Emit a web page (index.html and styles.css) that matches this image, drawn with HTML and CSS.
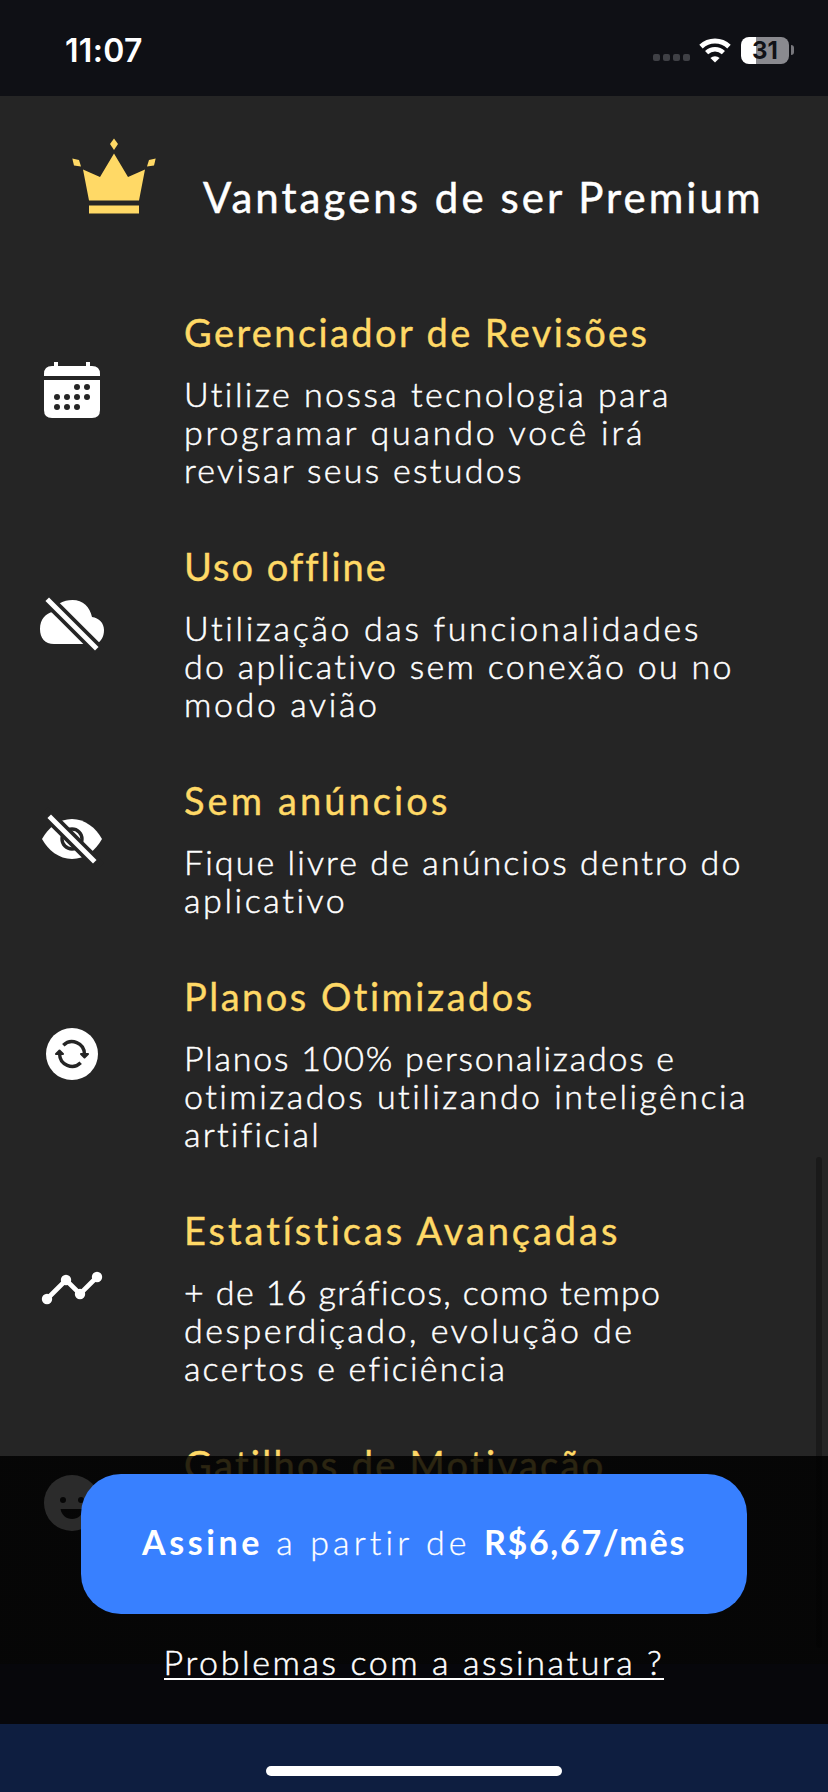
FILE: index.html
```html
<!DOCTYPE html>
<html lang="pt-BR">
<head>
    <meta charset="UTF-8">
    <meta name="viewport" content="width=device-width, initial-scale=1.0">
    <title>Premium</title>
    <link rel="stylesheet" href="styles.css">
</head>
<body>
    <div class="screen">
        <header class="status-bar">
            <span class="time">11:07</span>
            <div class="status-icons">
                <div class="signal"><i></i><i></i><i></i><i></i></div>
                <svg class="wifi" viewBox="0 0 32 25">
                    <path d="M2 8.6 A20.5 20.5 0 0 1 30 8.6" fill="none" stroke="#fff" stroke-width="5"/>
                    <path d="M7.6 14.6 A12.4 12.4 0 0 1 24.4 14.6" fill="none" stroke="#fff" stroke-width="4.6"/>
                    <path d="M16 24.6 L11.4 20 A6.6 6.6 0 0 1 20.6 20 Z" fill="#fff"/>
                </svg>
                <div class="battery">31</div>
                <div class="battery-cap"></div>
            </div>
        </header>

        <main class="sheet">
            <div class="sheet-header">
                <svg class="crown" viewBox="0 0 84 76">
                    <path d="M42 15.5 L56 39 L73 31.5 L67 62.5 H17 L11 31.5 L28 39 Z"/>
                    <path d="M17 67.5 H67 V75.5 H17 Z"/>
                    <path d="M42 0.5 L46 6 L42 12 L38 6 Z"/>
                    <path d="M0.3 20.6 L7 22 L9 28.6 L2 27.5 Z"/>
                    <path d="M83.7 20.6 L77 22 L75 28.6 L82 27.5 Z"/>
                </svg>
                <h1>Vantagens de ser Premium</h1>
            </div>

            <ul class="features">
                <li class="feature">
                    <svg class="icon" viewBox="0 0 64 64">
                        <path d="M4 18 V16 Q4 8 12 8 H14 V4 H18 V8 H46 V4 H50 V8 H52 Q60 8 60 16 V18 Z"/>
                        <path d="M4 22 H60 V52 Q60 60 52 60 H12 Q4 60 4 52 Z"/>
                        <g class="cut">
                            <circle cx="37" cy="29" r="3"/><circle cx="47" cy="29" r="3"/>
                            <circle cx="17" cy="39" r="3"/><circle cx="27" cy="39" r="3"/>
                            <circle cx="37" cy="39" r="3"/><circle cx="47" cy="39" r="3"/>
                            <circle cx="17" cy="49" r="3"/><circle cx="27" cy="49" r="3"/><circle cx="37" cy="49" r="3"/>
                        </g>
                    </svg>
                    <div class="feature-text">
                        <h2 class="t1">Gerenciador de Revisões</h2>
                        <p><span class="a1">Utilize nossa tecnologia para</span> <span class="a2">programar quando você irá</span> <span class="a3">revisar seus estudos</span></p>
                    </div>
                </li>
                <li class="feature">
                    <svg class="icon" viewBox="0 0 64 64">
                        <path d="M14 52 C5 52 0 46 0 37 C0 27 6 21 13 20 C16 12 23 8 32.5 8 C43 8 50 15 52 25 C59 26 64 31 64 38 C64 45 61 49 57 52 Z"/>
                        <path class="gap" d="M2 2 L64 64"/>
                        <path class="slash" d="M9 9 L55 55"/>
                    </svg>
                    <div class="feature-text">
                        <h2 class="t2">Uso offline</h2>
                        <p><span class="b1">Utilização das funcionalidades</span> <span class="b2">do aplicativo sem conexão ou no</span> <span class="b3">modo avião</span></p>
                    </div>
                </li>
                <li class="feature">
                    <svg class="icon" viewBox="0 0 64 64">
                        <path d="M2 32 C8 21 19 12 32 12 C45 12 56 21 62 32 C56 43 45 52 32 52 C19 52 8 43 2 32 Z"/>
                        <circle class="ring" cx="32" cy="32" r="10"/>
                        <path class="gap" d="M4 4 L60 60"/>
                        <path class="slash" d="M11 11 L53 53"/>
                    </svg>
                    <div class="feature-text">
                        <h2 class="t3">Sem anúncios</h2>
                        <p><span class="c1">Fique livre de anúncios dentro do</span> <span class="c2">aplicativo</span></p>
                    </div>
                </li>
                <li class="feature">
                    <svg class="icon" viewBox="0 0 64 64">
                        <circle cx="32" cy="32" r="26"/>
                        <path class="ring" d="M23.3 23.3 A12.4 12.4 0 0 1 44.4 32 M40.7 40.7 A12.4 12.4 0 0 1 19.6 32"/>
                        <path class="cut arrows" d="M41 32 H48 L44.5 35.5 Z M16 32 H23 L19.5 28.5 Z"/>
                    </svg>
                    <div class="feature-text">
                        <h2 class="t4">Planos Otimizados</h2>
                        <p><span class="d1">Planos 100% personalizados e</span> <span class="d2">otimizados utilizando inteligência</span> <span class="d3">artificial</span></p>
                    </div>
                </li>
                <li class="feature">
                    <svg class="icon" viewBox="0 0 64 64">
                        <path class="line" d="M7 43 L26 24 L40 38 L57 21"/>
                        <circle cx="7" cy="43" r="5.2"/><circle cx="26" cy="24" r="5.2"/>
                        <circle cx="40" cy="38" r="5.2"/><circle cx="57" cy="21" r="5.2"/>
                    </svg>
                    <div class="feature-text">
                        <h2 class="t5">Estatísticas Avançadas</h2>
                        <p><span class="e1">+ de 16 gráficos, como tempo</span> <span class="e2">desperdiçado, evolução de</span> <span class="e3">acertos e eficiência</span></p>
                    </div>
                </li>
                <li class="feature last">
                    <svg class="icon" viewBox="0 0 64 64">
                        <circle cx="32" cy="32" r="28"/>
                        <g class="cut">
                            <circle cx="23" cy="29" r="3"/><circle cx="41" cy="29" r="3"/>
                            <path d="M20.5 38 H43.5 C42.5 44 38 48 32 48 C26 48 21.5 44 20.5 38 Z"/>
                        </g>
                    </svg>
                    <div class="feature-text">
                        <h2 class="t6">Gatilhos de Motivação</h2>
                    </div>
                </li>
            </ul>
            <div class="scrollbar"></div>
        </main>

        <section class="subscribe">
            <button class="subscribe-button"><b class="action">Assine</b> a partir de <b class="price">R$6,67/mês</b></button>
            <a class="help-link">Problemas com a assinatura ?</a>
        </section>

        <footer class="bottom-bar">
            <div class="home-indicator"></div>
        </footer>
    </div>
</body>
</html>
```

FILE: styles.css
```css
* {
  box-sizing: border-box;
}

body {
  margin: 0;
  background-color: #0f1015;
  font-family: Lato, "Open Sans", sans-serif;
  color: white;
}

.screen {
  position: relative;
  display: flex;
  flex-direction: column;
  width: 828px;
  height: 1792px;
  overflow: hidden;
}

/* status bar */
.status-bar {
  display: flex;
  justify-content: space-between;
  align-items: center;
  height: 96px;
  padding: 4px 34px 0 65px;
  font-family: Inter, sans-serif;
}

.time {
  font-size: 32px;
  font-weight: 600;
  letter-spacing: 0.3px;
}

.status-icons {
  display: flex;
  align-items: center;
}

.signal {
  display: flex;
  gap: 3px;
  margin-top: 15px;
  margin-right: 9px;
}

.signal i {
  width: 7px;
  height: 7px;
  border-radius: 2px;
  background-color: #3f4045;
}

.wifi {
  width: 32px;
  height: 25px;
  margin-right: 10px;
}

.battery {
  width: 48px;
  height: 27px;
  border-radius: 8px;
  background: linear-gradient(to right, #fff 15px, #8a8a8f 15px);
  color: #111217;
  font-size: 24px;
  font-weight: 700;
  line-height: 27px;
  text-align: center;
}

.battery-cap {
  width: 3px;
  height: 10px;
  margin-left: 2px;
  border-radius: 0 4px 4px 0;
  background-color: #77777c;
}

/* sheet */
.sheet {
  position: relative;
  height: 1568px;
  background-color: #252525;
  overflow: hidden;
}

.sheet-header {
  display: flex;
  align-items: flex-start;
  height: 177px;
  padding: 42px 0 0 72px;
}

.crown {
  width: 84px;
  height: 76px;
  fill: #ffd966;
}

h1 {
  margin: 32px 0 0 47px;
  font-size: 42px;
  font-weight: 400;
  line-height: 54px;
  letter-spacing: 3.05px;
  white-space: nowrap;
  -webkit-text-stroke: 0.5px white;
}

.features {
  margin: 0;
  padding: 0;
  list-style: none;
}

.feature {
  display: flex;
  align-items: center;
  padding-left: 40px;
}

.icon {
  flex: none;
  width: 64px;
  height: 64px;
  margin-right: 80px;
  fill: #fff;
}

.cut {
  fill: #252525;
}

.gap,
.ring,
.slash,
.line {
  fill: none;
  stroke: #252525;
  stroke-width: 12.2;
}

.ring {
  stroke-width: 3.4;
}

.arrows {
  stroke: #252525;
  stroke-width: 2;
  stroke-linejoin: round;
}

.slash {
  stroke: #fff;
  stroke-width: 5;
  stroke-linecap: square;
}

.line {
  stroke: #fff;
  stroke-width: 4.7;
}

.feature-text {
  padding: 37px 0 18px;
}

h2 {
  margin: 0 0 21px;
  color: #ffd966;
  font-size: 38px;
  font-weight: 400;
  line-height: 44px;
  white-space: nowrap;
  -webkit-text-stroke: 0.4px #ffd966;
}

p {
  margin: 0;
  font-size: 34px;
  font-weight: 300;
  line-height: 38px;
  -webkit-text-stroke: 0.5px white;
}

p span {
  display: block;
  white-space: nowrap;
}

/* tracking of each line */
.t1 { letter-spacing: 2.4px; }
.t2 { letter-spacing: 2px; }
.t3 { letter-spacing: 3.1px; }
.t4 { letter-spacing: 2.5px; }
.t5 { letter-spacing: 2.95px; }
.t6 { letter-spacing: 2.3px; }

.a1 { letter-spacing: 2.45px; }
.a2 { letter-spacing: 2.8px; }
.a3 { letter-spacing: 2.3px; }
.b1 { letter-spacing: 2.65px; }
.b2 { letter-spacing: 2.3px; }
.b3 { letter-spacing: 2.6px; }
.c1 { letter-spacing: 2.1px; }
.c2 { letter-spacing: 2.6px; }
.d1 { letter-spacing: 1.77px; }
.d2 { letter-spacing: 2.47px; }
.d3 { letter-spacing: 2.25px; }
.e1 { letter-spacing: 1.4px; }
.e2 { letter-spacing: 2.5px; }
.e3 { letter-spacing: 2.15px; }

.last .feature-text {
  height: 196px;
}

.scrollbar {
  position: absolute;
  top: 1061px;
  right: 6px;
  width: 6px;
  height: 491px;
  border-radius: 3px;
  background-color: #1a1a1a;
}

/* subscribe panel, lies over the end of the list */
.subscribe {
  position: absolute;
  top: 1456px;
  left: 0;
  right: 0;
  height: 268px;
  display: flex;
  flex-direction: column;
  align-items: center;
  padding-top: 18px;
  background: linear-gradient(rgba(0, 0, 0, 0.83) 208px, #07070b 208px);
}

.subscribe-button {
  width: 666px;
  height: 140px;
  padding: 0 0 6px;
  border: none;
  border-radius: 40px;
  background-color: #3880ff;
  color: white;
  font-family: inherit;
  font-size: 34px;
  font-weight: 300;
  letter-spacing: 4.1px;
  white-space: nowrap;
  -webkit-text-stroke: 0.3px white;
}

.subscribe-button b {
  font-weight: 700;
  -webkit-text-stroke: 0;
}

.subscribe-button .action {
  letter-spacing: 3.6px;
}

.subscribe-button .price {
  letter-spacing: 1.7px;
}

.help-link {
  margin-top: 32px;
  border-bottom: 2px solid #fff;
  font-size: 34px;
  font-weight: 300;
  line-height: 32px;
  letter-spacing: 2.6px;
  white-space: nowrap;
  -webkit-text-stroke: 0.5px white;
}

.bottom-bar {
  display: flex;
  justify-content: center;
  margin-top: 60px;
  height: 68px;
  padding-top: 42px;
  background-color: #0e1e40;
}

.home-indicator {
  width: 296px;
  height: 10px;
  border-radius: 5px;
  background-color: #fff;
}
```
